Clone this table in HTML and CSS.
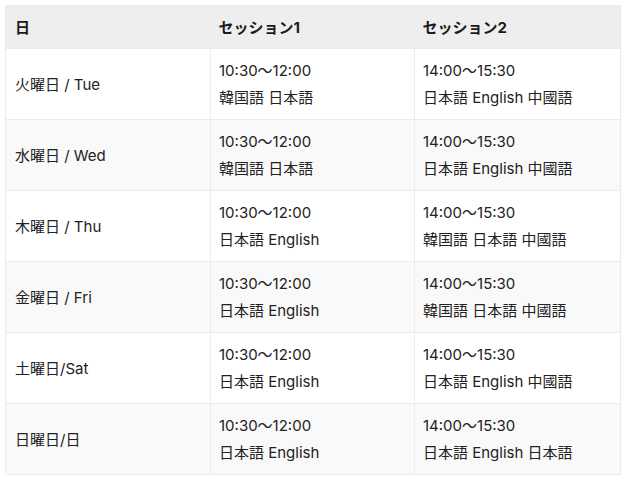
FILE: index.html
```html
<!DOCTYPE html>
<html lang="ja">
<head>
<meta charset="utf-8">
<link rel="stylesheet" href="styles.css">
</head>
<body>
<table class="schedule">
  <colgroup><col class="c1"><col class="c2"><col class="c3"></colgroup>
  <thead>
    <tr><th>日</th><th>セッション1</th><th>セッション2</th></tr>
  </thead>
  <tbody>
    <tr><td>火曜日 / Tue</td><td>10:30～12:00<br>韓国語 日本語</td><td>14:00～15:30<br>日本語 English 中國語</td></tr>
    <tr><td>水曜日 / Wed</td><td>10:30～12:00<br>韓国語 日本語</td><td>14:00～15:30<br>日本語 English 中國語</td></tr>
    <tr><td>木曜日 / Thu</td><td>10:30～12:00<br>日本語 English</td><td>14:00～15:30<br>韓国語 日本語 中國語</td></tr>
    <tr><td>金曜日 / Fri</td><td>10:30～12:00<br>日本語 English</td><td>14:00～15:30<br>韓国語 日本語 中國語</td></tr>
    <tr><td>土曜日/Sat</td><td>10:30～12:00<br>日本語 English</td><td>14:00～15:30<br>日本語 English 中國語</td></tr>
    <tr><td>日曜日/日</td><td>10:30～12:00<br>日本語 English</td><td>14:00～15:30<br>日本語 English 日本語</td></tr>
  </tbody>
</table>
</body>
</html>
```
FILE: styles.css
```css
html, body { margin: 0; padding: 0; background: #fff; }
body { padding: 5px 0 0 5px; font-family: Inter, "Noto Sans CJK JP", sans-serif; color: #222; }
.schedule {
  width: 615px;
  border-collapse: collapse;
  table-layout: fixed;
  font-size: 15px;
  line-height: 27px;
  border: 1px solid #ececec;
  box-shadow: 0 1px 2px rgba(0,0,0,0.04);
}
.c1 { width: 205px; }
.c2 { width: 204px; }
.c3 { width: 206px; }
.schedule th {
  background: #eeeeee;
  text-align: left;
  font-weight: 700;
  padding: 8px 8px 7px;
  height: 27px;
  color: #1a1a1a;
}
.schedule th:first-child { padding-left: 9px; }
.schedule td {
  padding: 8px 8px;
  border: 1px solid #ececec;
  vertical-align: middle;
}
.schedule td:first-child { padding-left: 9px; }
.schedule tbody tr:nth-child(even) td { background: #f9f9f9; }
```
